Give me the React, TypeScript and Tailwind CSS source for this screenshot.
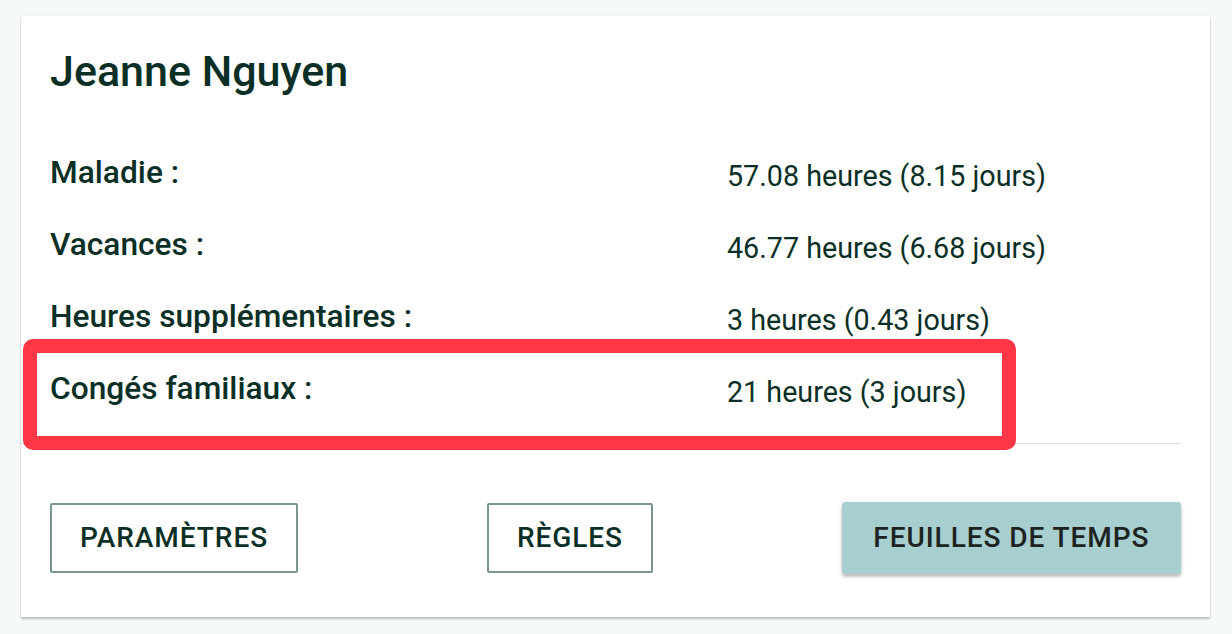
import { FC } from "react";

const rows = [
	{ label: "Maladie :", value: "57.08 heures (8.15 jours)" },
	{ label: "Vacances :", value: "46.77 heures (6.68 jours)" },
	{ label: "Heures supplémentaires :", value: "3 heures (0.43 jours)" },
	{ label: "Congés familiaux :", value: "21 heures (3 jours)" },
];

const App: FC = () => {
	return (
		<div
			className="relative min-h-screen bg-[#f5f9f8] pt-[16px] pl-[21px]"
			style={{ fontFamily: "Roboto, 'Noto Sans', sans-serif" }}
		>
			<div className="flex h-[601px] w-[1189px] flex-col bg-white shadow-[0_2px_2px_rgba(0,0,0,0.22),0_0_2px_rgba(0,0,0,0.08)]">
				<h1 className="mt-[29px] pl-[29px] text-[43px] font-medium leading-[52px] text-[#0a2f26]">
					Jeanne Nguyen
				</h1>

				<div className="mt-[58px] mr-[29px] border-b border-[#e0e0e0]">
					{rows.map((row) => (
						<div key={row.label} className="flex h-[72px] items-start pl-[29px]">
							<div className="w-[677px] text-[31.7px] font-medium leading-[36px] text-[#0a2f26]">
								{row.label}
							</div>
							<div className="mt-[3px] text-[28.7px] leading-[36px] text-[#0a2f26]">
								{row.value}
							</div>
						</div>
					))}
				</div>

				<div className="mt-[58px] flex items-center justify-between pl-[29px] pr-[29px]">
					<button className="h-[70px] rounded-[2px] border-2 border-[#7a9490] px-[28px] text-[28px] font-medium uppercase tracking-[0.95px] text-[#0a2f26]">
						Paramètres
					</button>
					<button className="h-[70px] rounded-[2px] border-2 border-[#7a9490] px-[28px] text-[28px] font-medium uppercase tracking-[0.95px] text-[#0a2f26]">
						Règles
					</button>
					<button className="h-[72px] rounded-[3px] bg-[#a8cfcf] px-[31.5px] text-[28px] font-medium uppercase tracking-[0.95px] text-[#1c2321] shadow-[0_3px_3px_rgba(0,0,0,0.2),0_1px_5px_rgba(0,0,0,0.1)]">
						Feuilles de temps
					</button>
				</div>
			</div>

			{/* annotation highlight */}
			<div className="pointer-events-none absolute left-[23px] top-[339px] h-[111px] w-[993px] rounded-[10px] border-[14px] border-[#ff3646]" />
		</div>
	);
};

export default App;
